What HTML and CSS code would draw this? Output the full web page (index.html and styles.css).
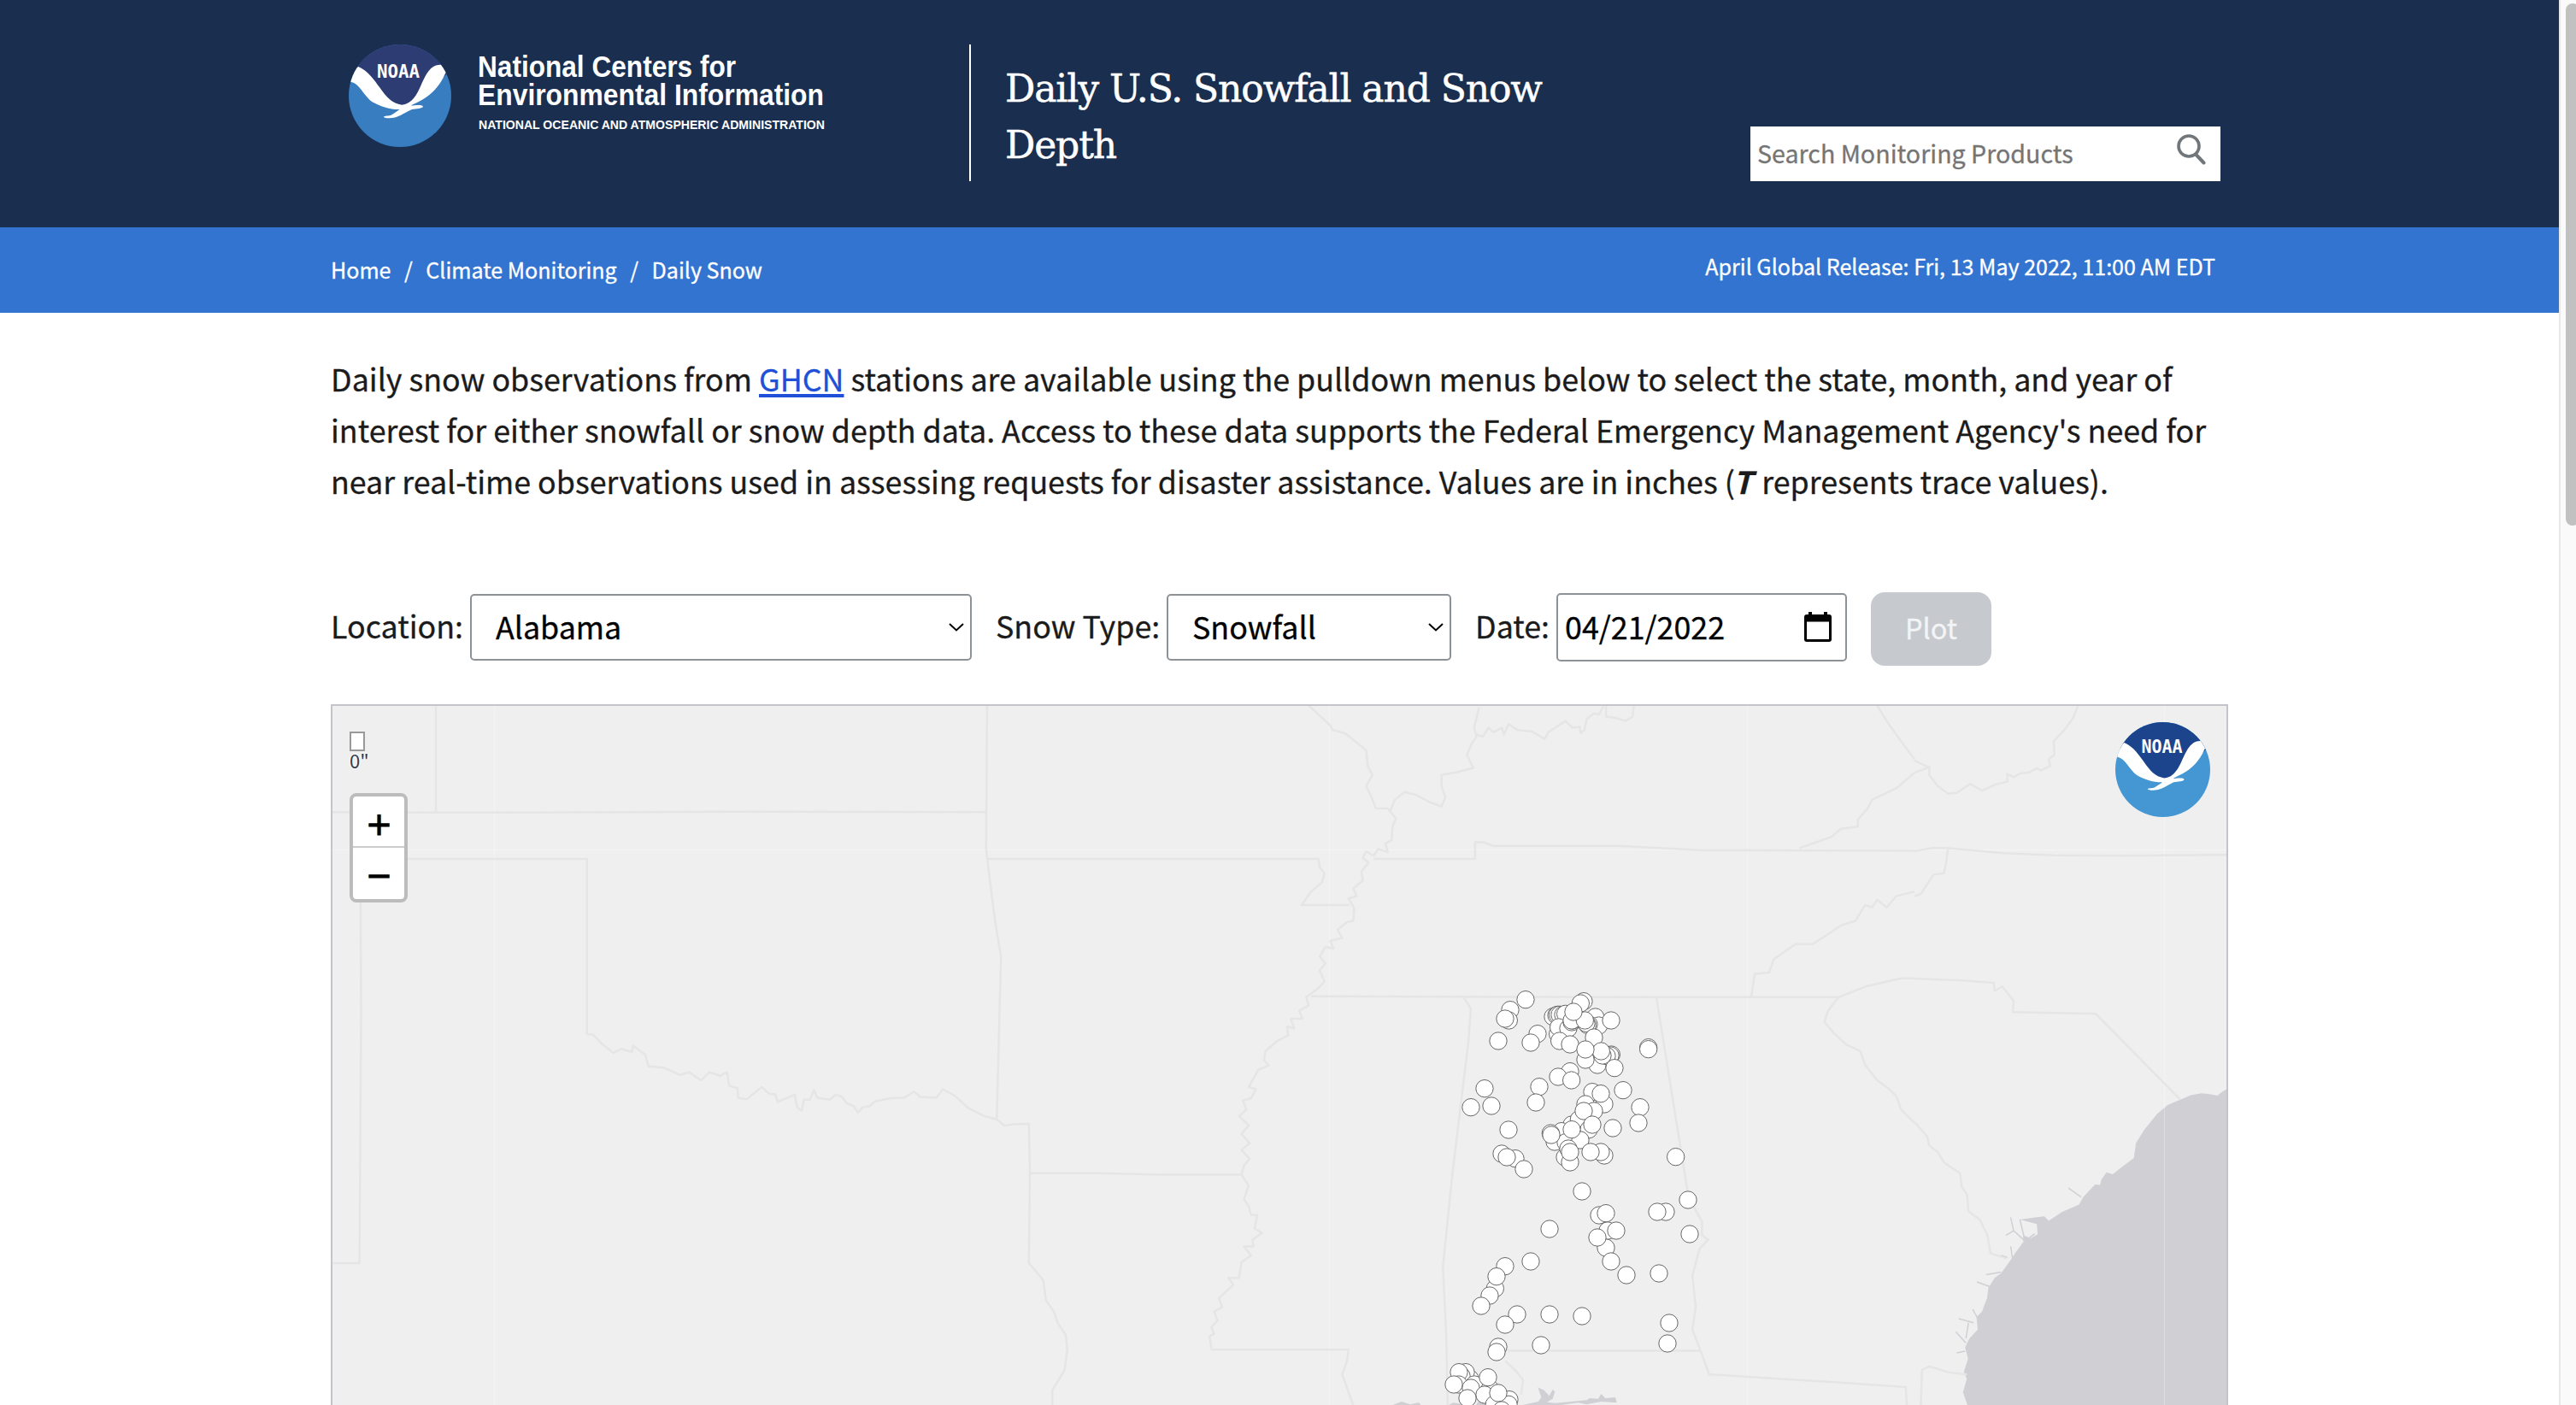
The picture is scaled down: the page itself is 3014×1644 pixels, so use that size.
FILE: index.html
```html
<!DOCTYPE html>
<html lang="en">
<head>
<meta charset="utf-8">
<title>Daily U.S. Snowfall and Snow Depth</title>
<link rel="stylesheet" href="styles.css">
</head>
<body>
<svg class="defs" width="0" height="0" aria-hidden="true">
  <defs>
    <clipPath id="disc"><circle cx="60" cy="60" r="60"/></clipPath>
    <symbol id="noaa" viewBox="0 0 120 120">
      <g clip-path="url(#disc)">
        <rect class="noaa-sea" width="120" height="120"/>
        <path class="noaa-sky" d="M0 0H120V30L72 72H55L8 34L0 30Z"/>
        <path fill="#fff" d="M11.4 26C23 31 30 42 36 50C45 63 51 69 62 70.7C70 70 77 65 83.700 49.700C90 36 95 24 107 23.700L122 22L113 34C106 50 97 58 86 64.700C80 68 76 69.500 73 71.500C78 71 87 70 87 72.700C86.500 75 79 75 74 76C67 79 60 84 54 85.500C49 86.800 42 86.500 40.800 84.700C42 83 47 84 50 82.400C54 80 57 78 59.500 76C50 76.500 38 73 28 67.500C18 61 13 46 2.900 44L-6 36Z"/>
      </g>
    </symbol>
  </defs>
</svg>
<div class="viewport">
<div class="page">
  <header class="header">
    <div class="brand">
      <svg class="brand-mark" width="120" height="120" viewBox="0 0 120 120"><use href="#noaa" width="120" height="120"/><text class="noaa-word" x="33" y="39.300" textLength="50" lengthAdjust="spacingAndGlyphs">NOAA</text></svg>
      <svg class="brand-text" width="420" height="120">
        <text class="bt-large" x="0" y="38" textLength="302" lengthAdjust="spacingAndGlyphs">National Centers for</text>
        <text class="bt-large" x="0" y="71" textLength="405" lengthAdjust="spacingAndGlyphs">Environmental Information</text>
        <text class="bt-small" x="1" y="99" textLength="405" lengthAdjust="spacingAndGlyphs">NATIONAL OCEANIC AND ATMOSPHERIC ADMINISTRATION</text>
      </svg>
    </div>
    <h1 class="title">Daily U.S. Snowfall and Snow<br>Depth</h1>
    <div class="search">
      <span>Search Monitoring Products</span>
      <svg width="34" height="36" viewBox="0 0 34 36"><circle cx="14" cy="14" r="12" fill="none" stroke="#71767a" stroke-width="3.600"/><path d="M22 23.500L31.500 33.500" stroke="#71767a" stroke-width="4" stroke-linecap="round"/></svg>
    </div>
  </header>
  <nav class="bar">
    <div class="crumbs"><span>Home</span><i>/</i><span>Climate Monitoring</span><i>/</i><span>Daily Snow</span></div>
    <div class="release">April Global Release: Fri, 13 May 2022, 11:00 AM EDT</div>
  </nav>
  <main class="main">
    <p class="intro">Daily snow observations from <a href="#">GHCN</a> stations are available using the pulldown menus below to select the state, month, and year of<br>interest for either snowfall or snow depth data. Access to these data supports the Federal Emergency Management Agency's need for<br>near real-time observations used in assessing requests for disaster assistance. Values are in inches (<b>T</b> represents trace values).</p>
    <form class="form">
      <label class="label l-loc">Location:</label>
      <div class="field f-loc"><span>Alabama</span><svg width="18" height="10" viewBox="0 0 18 10"><path d="M1 1L9 8.500L17 1"/></svg></div>
      <label class="label l-type">Snow Type:</label>
      <div class="field f-type"><span>Snowfall</span><svg width="18" height="10" viewBox="0 0 18 10"><path d="M1 1L9 8.500L17 1"/></svg></div>
      <label class="label l-date">Date:</label>
      <div class="field f-date"><span>04/21/2022</span><svg class="cal" width="32" height="36" viewBox="0 0 32 36"><path fill="#000" stroke="none" fill-rule="evenodd" d="M5 0H9V3H23V0H27V3H29Q32 3 32 6V32Q32 35 29 35H3Q0 35 0 32V6Q0 3 3 3H5ZM3 11.500V32H29V11.500Z"/></svg></div>
      <button class="plot" type="button">Plot</button>
    </form>
    <section class="map">
      <svg class="basemap" width="2216" height="818" viewBox="389 826 2216 818">
        <g class="water" transform="translate(2240 820) scale(.4936 .5255)">
          <path d="M745 863L730 870L718 879L700 876L680 874L655 878L630 888L600 900L575 920L545 955L525 985L520 1018L485 1043L470 1054L455 1050L443 1066L440 1078L428 1077L415 1090L400 1105L390 1122L350 1138L318 1158L308 1148L290 1150L250 1155L290 1165L292 1188L275 1197L258 1190L258 1205L240 1228L228 1245L205 1275L190 1285L175 1308L172 1330L160 1360L147 1372L150 1400L130 1420L120 1440L127 1465L117 1495L124 1510L115 1540L130 1580H760Z"/>
          <path class="creek" d="M262 1203L235 1180L228 1150M235 1180L217 1190M262 1203L250 1155M285 1187L262 1203M232 1240L228 1215M220 1240L205 1235M205 1272L170 1278M180 1305L148 1294M150 1375L138 1355M140 1385L105 1376M122 1420L128 1385M122 1430L98 1405M120 1448L100 1452M395 1105L365 1085"/>
        </g>
        <g class="water" transform="translate(1660 1380) scale(.3333)">
          <path d="M418 730L440 740L458 760L470 738L478 745L470 770L450 782L480 785L590 775L600 768L630 770L640 753L655 768L690 765L695 784L640 780L590 790L560 784L480 795H350L420 780L430 765ZM200 795L210 778L240 780L250 795ZM-100 795L-60 780L-30 790L0 783L10 795ZM100 795L120 784L150 788V795Z"/>
        </g>
        <g class="seam">
          <path d="M578.500 826V1644M1555.500 826V1644M2044.500 826V1644M2532.500 826V1644M389 994.500H2605"/>
        </g>
        <g class="border" transform="translate(380 820) scale(.625 .5255)">
          <path d="M208 0V248M14 248L340 249L760 247L1238 248M1240 0L1238 330L1245 400L1256 500L1266 570L1263 700L1258 932M1241 352H1568M150 352H491V742L502 743L520 765L540 784L555 775L575 782L577 768L600 788L606 814L635 817L665 833L682 827L704 845L720 827L740 835L753 827L757 857L772 862L774 884L790 887L818 860L832 875L843 876L848 893L880 877L884 905L893 913L897 888L908 888L916 867L922 884L945 888L957 877L968 882L978 897L990 902L998 917L1007 905L1020 903L1030 892L1060 885L1085 884L1103 870L1115 882L1145 884L1157 865L1180 880L1205 907L1235 925L1258 932L1272 946L1290 943L1318 942L1320 1052L1318 1252L1345 1290L1350 1335L1365 1360L1372 1385L1387 1412L1390 1445L1385 1490L1362 1535L1362 1568M1320 1052H1450L1568 1055M67 445L68 700L65 1252H14"/>
        </g>
        <g class="border" transform="translate(1360 820) scale(.5612 .5255)">
          <path d="M305 10L350 55L355 65L380 72L425 110L428 145L438 165L425 190L435 212L445 240L470 240L487 262L480 280L478 310L465 318L470 337L450 330L440 345L425 335L418 350L430 360L415 380L418 400L398 418L405 435L388 440L400 462L398 490L385 493L365 510L375 528L350 535L357 552L340 548L328 570L340 585L328 600L338 625L325 640L300 660L305 678L285 690L292 708L268 708L275 730L260 725L262 745L240 757L215 780L212 800L222 812L200 822L180 860L195 865L185 885L168 890L175 910L160 925L180 945L165 965L182 985L165 1000L182 1020L170 1035L165 1055L180 1080L170 1110L180 1125L185 1145L198 1145L192 1175L208 1185L188 1200L190 1215L170 1215L185 1235L165 1250L160 1285L138 1285L148 1300L130 1318L118 1330L125 1350L108 1360L115 1380L102 1395L108 1410L98 1415L103 1445H388L385 1470L375 1500L385 1530L398 1568"/>
          <path d="M475 245L485 220L505 203L530 210L560 227L582 235L590 215L582 190L582 165L610 160L648 150L635 120L645 95L655 80L650 60L660 15M655 75L668 80L680 60L690 70L708 60L712 75L722 52L740 65L770 68L797 85L805 70L840 45L855 60L870 58L872 72L880 65L885 40L900 28L910 30L920 12M925 12V35L945 38L965 45L980 36L983 12"/>
          <path d="M0 352H325L328 370L338 385L332 405L310 425L290 455H390M440 352H652V315H670L690 323L950 323L1130 333L1568 334M310 658L1030 660H1410L1470 635L1540 618H1568M1490 10L1510 45L1540 90L1568 130M1568 160L1530 195L1480 220L1470 240L1450 265L1450 280L1415 285L1395 303L1328 328M1228 658L1235 608L1265 605L1275 575L1320 542H1355L1385 522L1415 500L1445 490L1465 455L1480 460L1490 443L1510 460L1530 435L1568 425"/>
          <path d="M628 660L643 685L638 760L605 1050L585 1260L592 1420L595 1568M1030 660L1060 860L1097 1105L1125 1160L1125 1190L1138 1200L1120 1220L1105 1280L1112 1350L1105 1400L1122 1447L1140 1500L1400 1517L1550 1528L1552 1568M720 1447H1122M715 1470L735 1490L752 1512L748 1545M1410 660L1388 690L1380 715L1400 740L1425 765L1455 780L1465 810L1490 845L1510 860L1530 880L1540 910L1568 940M0 1055H165"/>
        </g>
        <g class="border" transform="translate(2240 820) scale(.4936 .5255)">
          <path d="M388 10L375 40L355 65L330 90L332 120L318 130L322 145L300 155L290 150L270 160L250 162L235 170L220 163L220 180L190 187L160 200L132 185L100 205L80 207L55 190L35 165L35 148L15 140L0 132M0 160L35 148M0 335L40 328H80L210 339L330 344L500 345L742 343M80 328L75 360L70 384L45 387L15 430L0 435M0 619L100 622L188 628L190 646L208 636L235 668L233 693L430 697L630 888M0 938L30 970L35 990L55 1005L70 1028L108 1052L112 1082L125 1100L128 1137L155 1155L173 1190L180 1230L218 1242M15 1568L18 1490L35 1482L80 1495L124 1500"/>
        </g>
      </svg>
      <svg class="stations" width="2216" height="818" viewBox="389 826 2216 818"><g id="north" transform="translate(1660 1120) scale(.33333)"></g><g id="south" transform="translate(1660 1380) scale(.33333)"></g></svg>
      <div class="legend"><i></i><span>0"</span></div>
      <div class="zoom"><span>+</span><span>−</span></div>
      <svg class="map-logo" width="111" height="111" viewBox="0 0 120 120"><use href="#noaa" width="120" height="120"/><text class="noaa-word" x="33" y="39.300" textLength="52" lengthAdjust="spacingAndGlyphs">NOAA</text></svg>
    </section>
  </main>
</div>
<div class="scrollbar"><div class="thumb"></div></div>
</div>
<script src="stations.js"></script>
</body>
</html>
```
FILE: styles.css
```css
* { box-sizing: border-box; }
body { margin: 0; background: #fff; color: #1b1b1b; font-family: "Noto Sans CJK SC", "Open Sans", sans-serif; }
.defs { position: absolute; }
.viewport { display: flex; width: 3014px; height: 1644px; overflow: hidden; }
.page { width: 2994px; height: 1644px; overflow: hidden; -webkit-text-stroke: .3px currentColor; }
.header { display: flex; align-items: flex-start; height: 266px; padding: 52px 396px 0 408px; background: #1a2e4f; }
.brand { display: flex; width: 726px; -webkit-text-stroke: 0; }
.brand-mark, .brand-text { overflow: visible; }
.brand-text { margin-left: 31px; }
.bt-large, .bt-small { fill: #fff; font-family: "Liberation Sans", Arial, sans-serif; font-weight: 700; }
.bt-large { font-size: 35.500px; }
.bt-small { font-size: 15.500px; }
.noaa-sea { fill: var(--sea, #377dc0); }
.noaa-sky { fill: var(--sky, #2d3c73); }
.noaa-word { fill: #fff; font-family: "DejaVu Sans Mono", monospace; font-weight: 700; font-size: 22px; }
.title { margin: 0; width: 700px; height: 160px; padding: 19px 0 0 40px; border-left: 2px solid #fff; color: #fff; font-family: "DejaVu Serif", serif; font-weight: 400; font-size: 44px; line-height: 66px; white-space: nowrap; letter-spacing: -1.100px; -webkit-text-stroke: .5px #fff; }
.search { display: flex; justify-content: space-between; width: 550px; height: 64px; margin: 96px 0 0 auto; padding: 9px 17px 0 8px; background: #fff; color: #757575; font-size: 28.600px; line-height: 43px; }
.bar { display: flex; justify-content: space-between; height: 100px; padding: 0 402px 0 387px; background: #3374d0; color: #fff; font-size: 25.060px; }
.crumbs { line-height: 98px; }
.crumbs i { margin: 0 15.500px; font-style: normal; }
.release { line-height: 90px; }
.main { width: 2220px; margin-left: 387px; padding-top: 46px; }
.intro { margin: 0; font-size: 35.820px; line-height: 60px; white-space: nowrap; }
.intro a { color: #2050d8; text-decoration: underline; text-decoration-thickness: 4px; text-underline-offset: 3px; text-decoration-skip-ink: none; }
.intro b { margin: 0 3px 0 -2px; font-style: italic; font-weight: 700; }
.form { display: flex; height: 131px; margin-top: 101px; font-size: 35.820px; }
.label { height: 78px; line-height: 77px; white-space: nowrap; }
.l-loc { width: 163px; }
.l-type { width: 228px; padding-left: 28px; }
.l-date { width: 123px; padding-left: 28px; }
.field { display: flex; justify-content: space-between; align-items: center; height: 78px; margin-top: 2px; border: 2px solid #8d9297; border-radius: 5px; background: #fff; color: #000; line-height: 70px; }
.field span { margin-top: -4px; }
.field path { fill: none; stroke: #000; stroke-width: 2; }
.f-loc { width: 587px; padding: 0 7px 0 28px; }
.f-type { width: 333px; padding: 0 7px 0 28px; }
.f-date { width: 340px; height: 80px; margin-top: 1px; padding: 0 16px 0 8px; }
.field .cal path { fill: #000; stroke: none; }
.plot { width: 141px; height: 86px; margin-left: 28px; padding: 0 0 4px; border: 0; border-radius: 16px; background: #c6cace; color: #f3f4f5; font: 400 32.500px/80px "Noto Sans CJK SC", sans-serif; }
.map { position: relative; width: 2220px; height: 824px; border: 2px solid #c3c5ca; background: #efefef; overflow: hidden; -webkit-text-stroke: 0; }
.basemap, .stations { position: absolute; left: 0; top: 0; }
.water path { fill: #d0cfd4; }
.water .creek { fill: none; stroke: #d0cfd4; stroke-width: 3; }
.seam path { fill: none; stroke: #fff; stroke-opacity: .3; stroke-width: 1; }
.border path { fill: none; stroke: #e5e5e5; stroke-width: 2.500; stroke-linejoin: round; vector-effect: non-scaling-stroke; }
.stations circle { fill: #fff; stroke: #666; stroke-width: 3; }
.legend { position: absolute; left: 20px; top: 30px; display: flex; flex-direction: column; color: #333a48; font-size: 22px; line-height: 21px; text-shadow: 0 0 3px #fff, 0 0 3px #fff; }
.legend i { width: 18px; height: 23px; border: 2px solid #999; background: #fff; }
.zoom { position: absolute; left: 20px; top: 102px; width: 68px; height: 128px; border: 4px solid #bcbcbc; border-radius: 8px; background: #fff; color: #000; font: 400 37px/66px "DejaVu Sans", sans-serif; -webkit-text-stroke: 1.200px #000; text-align: center; }
.zoom span { display: block; height: 60px; padding-left: 1px; }
.zoom span:first-child { border-bottom: 2px solid #ccc; }
.map-logo { --sea: #4597d3; --sky: #1c448d; position: absolute; right: 19px; top: 19px; }
.scrollbar { width: 20px; border-left: 2px solid #e8e8e8; background: #fafafa; overflow: hidden; }
.thumb { width: 16px; height: 611px; margin: 4px 0 0 6px; border-radius: 8px; background: #c1c1c1; }
```
FILE: stations.js
```js
// Station markers, in drawing order, in thirds of a map pixel.
const stations = {
  north: [[375,149],[321,185],[316,222],[303,216],[279,294],[417,269],[393,300],[806,317],[806,323],[231,461],[183,527],[255,522],[423,455],[411,510],[531,401],[489,420],[536,432],[315,606],[291,690],[339,707],[369,744],[309,702],[573,822],[902,701],[945,852],[717,467],[777,527],[771,582],[681,600],
    [579,155],[568,162],[471,209],[483,204],[488,202],[495,202],[507,202],[515,199],[488,270],[491,246],[525,250],[494,294],[531,306],[620,210],[632,240],[675,222],[597,236],[592,238],[588,232],[537,228],[540,222],[537,222],[583,222],[543,192],[615,282],[627,378],[585,360],[676,342],[672,345],[660,347],[645,345],[640,330],[585,324],[687,389],
    [609,473],[651,516],[639,479],[585,516],[615,540],[537,588],[562,570],[579,540],[597,605],[609,588],[501,611],[477,648],[516,650],[463,618],[465,624],[567,642],[537,605],[513,702],[531,720],[525,672],[531,684],[651,696],[639,684],[603,684]],
  south: [[459,174],[393,288],[303,305],[268,383],[249,408],[273,341],[219,444],[345,474],[303,510],[459,474],[573,480],[429,582],[279,588],[273,606],[633,126],[657,119],[663,180],[693,180],[657,240],[627,204],[675,288],[729,336],[843,330],[867,114],[837,114],[951,192],[879,504],[873,576],
    [180,700],[165,677],[150,690],[141,677],[140,720],[123,720],[195,720],[183,732],[250,735],[243,695],[231,756],[171,768],[265,790],[318,773],[315,790],[279,750],[291,810]]
};
for (const [id, points] of Object.entries(stations)) {
  document.getElementById(id).innerHTML = points
    .map(([x, y]) => `<circle cx="${x}" cy="${y}" r="30.5"/>`).join("");
}
```
